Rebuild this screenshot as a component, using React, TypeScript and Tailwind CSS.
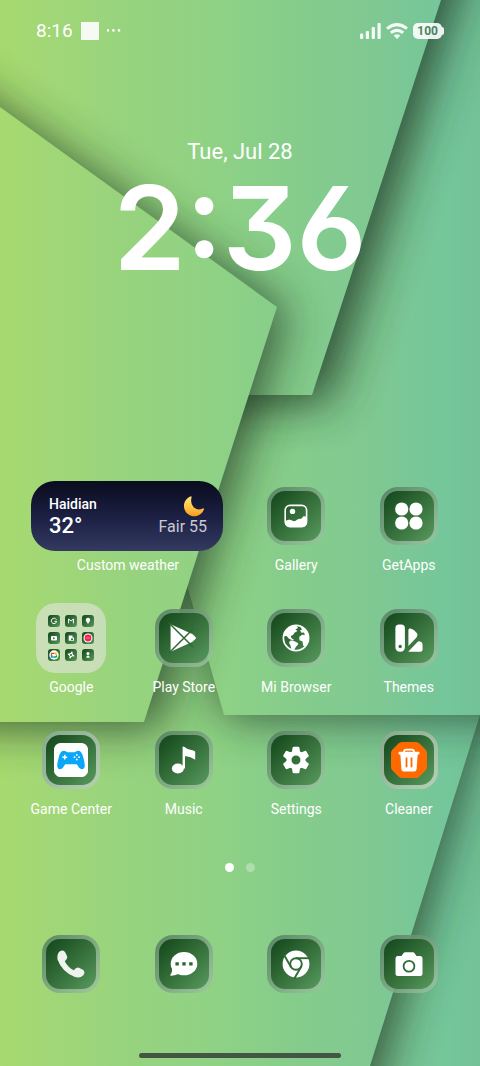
import type { ReactNode } from "react";

function Wallpaper() {
  return (
    <svg
      className="absolute inset-0 -z-10 h-full w-full"
      viewBox="0 0 480 1066"
      preserveAspectRatio="none"
      aria-hidden="true"
    >
      <defs>
        <linearGradient id="sheet" gradientUnits="userSpaceOnUse" x1="0" y1="0" x2="480" y2="0">
          <stop offset="0" stopColor="#a7da6f" />
          <stop offset="0.1" stopColor="#a1d776" />
          <stop offset="0.25" stopColor="#98d37d" />
          <stop offset="0.45" stopColor="#8fd285" />
          <stop offset="0.6" stopColor="#86cd8b" />
          <stop offset="0.78" stopColor="#7fc892" />
          <stop offset="0.93" stopColor="#74c69b" />
          <stop offset="1" stopColor="#73c197" />
        </linearGradient>
        <filter id="soft" filterUnits="userSpaceOnUse" x="-160" y="-160" width="800" height="1386">
          <feGaussianBlur stdDeviation="23" />
        </filter>
      </defs>
      <rect width="480" height="1066" fill="url(#sheet)" />
      <path d="M-60 500H545L383 1066L345 1180H-60Z" fill="#1c3424" filter="url(#soft)" opacity="0.78" />
      <path d="M0 450H563L370 1066H0Z" fill="url(#sheet)" />
      <path d="M130 380H600V719H226Z" fill="#1c3424" filter="url(#soft)" opacity="0.7" />
      <path d="M0 0H480V715H224L120 350Z" fill="url(#sheet)" />
      <path d="M-60 -60H476L328 404H100Z" fill="#1c3424" filter="url(#soft)" opacity="0.82" />
      <path d="M0 0H441L312 395H100L0 300Z" fill="url(#sheet)" />
      <path d="M-80 50L0 108L288 311L159 728H-80Z" fill="#1c3424" filter="url(#soft)" opacity="0.74" />
      <path d="M0 107L277 307L144 722H0Z" fill="url(#sheet)" />
    </svg>
  );
}

function Glyph({ children }: { children: ReactNode }) {
  return (
    <svg viewBox="0 0 50 50" className="h-full w-full" fill="currentColor" aria-hidden="true">
      {children}
    </svg>
  );
}

const glyphs = {
  gallery: (
    <Glyph>
      <rect x="14.2" y="14.4" width="21.4" height="21.2" rx="4.8" fill="none" stroke="currentColor" strokeWidth="1.6" />
      <circle cx="21.5" cy="20.4" r="2.7" />
      <path d="M14 30L17.5 28.8Q19.5 28.2 21.5 29.8Q24 31 26 28.8Q28.5 27.5 30 28L32.5 25.3Q34 24.8 36 26V31Q36 36 31 36H19Q14 36 14 31Z" />
    </Glyph>
  ),
  getApps: (
    <Glyph>
      <circle cx="17.7" cy="18" r="6.6" />
      <circle cx="32" cy="18" r="6.6" />
      <circle cx="17.7" cy="32" r="6.6" />
      <circle cx="32" cy="32" r="6.6" />
    </Glyph>
  ),
  play: (
    <Glyph>
      <path d="M11.6 11.2L32 20.6Q34 21 37.2 25Q34 29 32 29.4L11.6 38.8Z" />
      <path d="M10 10L34 34M10 40L34 16" stroke="#2c6732" strokeWidth="1.5" />
    </Glyph>
  ),
  browser: (
    <Glyph>
      <circle cx="25" cy="25" r="12.6" fill="none" stroke="currentColor" strokeWidth="1.7" />
      <path d="M12.3 23.5Q13.5 16.5 20 13.2L25.5 12.5L27 15L24.5 16.5L26.5 18L23.5 19.8L22 22L19.8 23L20.5 25.2L23 26.5L21.5 27.3L18 25.8L15.5 23Z" />
      <path d="M19 27.8Q22 26.8 24 28.5L27.3 30.3Q27 32.5 25 33.8L22.8 37.6L20.3 36.5L19.5 32.5L18 30Z" />
      <path d="M29 13.5L34 15.5L37.5 21V28L34.5 33.2L32.2 32.8L31.5 28.5L28.5 27.2L28.2 24L31 21.8L33.8 22L33 19.5L30.5 19.8L29 17.6L31 16.4Z" />
    </Glyph>
  ),
  themes: (
    <Glyph>
      <path
        fillRule="evenodd"
        d="M15 11.6H17.2Q20.9 11.6 20.9 15.3V34Q20.9 38.7 16.2 38.7Q11.4 38.7 11.4 34V15.3Q11.4 11.6 15 11.6ZM16.2 31.8A1.7 1.7 0 1 0 16.2 35.2A1.7 1.7 0 1 0 16.2 31.8Z"
      />
      <path d="M24.4 17Q24.5 15 26.5 15.6Q30 16.3 33 20.3Q34.5 22.5 32.5 24.5L24.4 33Z" />
      <path d="M24.2 38.7L33 29.5Q34.3 28.2 36 28.4Q38.3 28.8 38.5 31L38.6 36.5Q38.5 38.7 36.3 38.7Z" />
    </Glyph>
  ),
  game: (
    <Glyph>
      <path d="M14 8H36Q38 8 39.5 9.5L40.5 10.5Q42 12 42 14V36Q42 38 40.5 39.5L39.5 40.5Q38 42 36 42H14Q12 42 10.5 40.5L9.5 39.5Q8 38 8 36V14Q8 12 9.5 10.5L10.5 9.5Q12 8 14 8Z" />
      <path
        fill="#0aa6f7"
        d="M16.5 16Q19 15 21.3 17.3H28.7Q31 15 33.5 16Q36 17 37.3 22.5Q39.2 29.5 38.6 32Q37.8 34.6 35.5 34.2Q33 33.5 30.8 29.2H19.2Q17 33.5 14.5 34.2Q12.2 34.6 11.4 32Q10.8 29.5 12.7 22.5Q14 17 16.5 16Z"
      />
      <path d="M16.3 22.2H21.1M18.7 19.8V24.6" stroke="white" strokeWidth="1.5" />
      <circle cx="30.8" cy="19.9" r="0.9" />
      <circle cx="30.8" cy="24.5" r="0.9" />
      <circle cx="28.5" cy="22.2" r="0.9" />
      <circle cx="33.1" cy="22.2" r="0.9" />
    </Glyph>
  ),
  music: (
    <Glyph>
      <ellipse cx="18.9" cy="33.5" rx="6" ry="5" />
      <path d="M23.6 11.7Q24.5 11.2 25.5 12Q28.5 14.8 33.5 15.3Q36.2 15.7 36.2 17V24.7Q31 20.8 26 21.2V33.5H23.6Z" />
    </Glyph>
  ),
  settings: (
    <Glyph>
      <circle cx="25" cy="25" r="7" fill="none" stroke="currentColor" strokeWidth="5" />
      {[0, 60, 120, 180, 240, 300].map((angle) => (
        <path
          key={angle}
          d="M22.8 11.7H27.2Q28.2 11.7 28.4 12.8L29.4 18.5H20.6L21.6 12.8Q21.8 11.7 22.8 11.7Z"
          transform={`rotate(${angle} 25 25)`}
        />
      ))}
    </Glyph>
  ),
  cleaner: (
    <Glyph>
      <path
        d="M18 7H32Q34 7 35.5 8.5L41.5 14.5Q43 16 43 18V32Q43 34 41.5 35.5L35.5 41.5Q34 43 32 43H18Q16 43 14.5 41.5L8.5 35.5Q7 34 7 32V18Q7 16 8.5 14.5L14.5 8.5Q16 7 18 7Z"
        fill="#ff6a00"
      />
      <path d="M20 17Q20 14.6 22.2 14.6H28Q30 14.6 30 17" fill="none" stroke="white" strokeWidth="1.8" />
      <rect x="14.5" y="16.8" width="21" height="2.6" rx="1" />
      <path d="M16.3 19H33.7L32.6 34Q32.4 36.6 30 36.6H20Q17.6 36.6 17.4 34Z" />
      <path d="M22.5 22.5V32.3M27.5 22.5V32.3" stroke="#ff6a00" strokeWidth="1.8" />
    </Glyph>
  ),
  phone: (
    <Glyph>
      <path
        fill="#eef3ee"
        d="M13.5 12.5Q17.5 10 19.3 13.5L21 17Q22 19.5 18.8 22.2Q22 28.5 27.8 31.2Q30.5 27.8 33 28.8L37.3 31Q39.5 33.5 37.3 36.3Q34 39.5 29 38Q16 33 11.5 20.5Q10.8 15 13.5 12.5Z"
      />
    </Glyph>
  ),
  messages: (
    <Glyph>
      <ellipse cx="25" cy="24.7" rx="13.3" ry="11.6" />
      <path d="M12.5 27Q14.2 32 11.3 36Q11 37 12.3 36.8Q16 36.6 18.5 35.2L22 30Z" />
      <path d="M16.4 23.2H19.8V26.6H16.4ZM23.3 23.2H26.7V26.6H23.3ZM30.2 23.2H33.6V26.6H30.2Z" fill="#2b6732" />
    </Glyph>
  ),
  chrome: (
    <Glyph>
      <circle cx="25" cy="25" r="13.4" />
      <circle cx="25" cy="25" r="5.8" fill="none" stroke="#2f6b36" strokeWidth="1.9" />
      {[0, 120, 240].map((angle) => (
        <path
          key={angle}
          d="M25 19.2H39"
          stroke="#2f6b36"
          strokeWidth="1.9"
          transform={`rotate(${angle} 25 25)`}
        />
      ))}
    </Glyph>
  ),
  camera: (
    <Glyph>
      <path d="M13.5 17H17.5L19.6 14Q20.1 13.3 21 13.3H29Q29.9 13.3 30.4 14L32.5 17H36Q38.5 17 38.5 19.5V34.5Q38.5 37 36 37H14Q11.5 37 11.5 34.5V19.5Q11.5 17 13.5 17Z" />
      <circle cx="25" cy="27.3" r="5.4" fill="none" stroke="#2f6b36" strokeWidth="1.8" />
    </Glyph>
  ),
};

function Tile({ children, bright = false }: { children: ReactNode; bright?: boolean }) {
  return (
    <span
      className={`block size-[58px] rounded-[18px] bg-linear-to-br p-1 ${
        bright ? "from-[#86a88b] to-[#b7d2b5]" : "from-[#557f62]/90 to-[#a3c8a5]/80"
      }`}
    >
      <span className="block size-full rounded-[14px] bg-linear-to-br from-[#12461a] to-[#589a5d] text-white">
        {children}
      </span>
    </span>
  );
}

function AppIcon({ name, children, bright }: { name: string; children: ReactNode; bright?: boolean }) {
  return (
    <button type="button" className="flex flex-col items-center gap-1">
      <span className="flex h-[70px] items-center">
        <Tile bright={bright}>{children}</Tile>
      </span>
      <span className="text-sm leading-5 whitespace-nowrap">{name}</span>
    </button>
  );
}

const folderApps: ReactNode[] = [
  <path d="M8.4 4.6A2.7 2.7 0 1 0 8.7 6.3H6.4" fill="none" stroke="white" />,
  <path d="M3.6 8.3V4L6 6L8.4 4V8.3" fill="none" stroke="white" />,
  <path d="M6 9L4.2 6.2A2.2 2.2 0 1 1 7.8 6.2Z" fill="white" />,
  <>
    <rect x="3" y="4" width="6" height="4.4" rx="1" fill="white" />
    <path d="M5.2 5L7.2 6.2L5.2 7.4Z" fill="#2b6732" />
  </>,
  <>
    <path d="M3.7 3.5H7.5V5.5H9V8.7H3.7Z" fill="white" />
    <circle cx="7" cy="7.2" r="1" fill="#2b6732" />
  </>,
  <>
    <circle cx="6" cy="6" r="4.5" fill="white" />
    <circle cx="6" cy="6" r="3.4" fill="#f5244f" />
    <path d="M4 6H8" stroke="#ff8ba2" strokeWidth="0.8" />
  </>,
  <>
    <circle cx="6" cy="6" r="4.7" fill="white" />
    <path d="M3.5 7V4.3H6" fill="none" stroke="#e94335" strokeWidth="1.2" />
    <path d="M6 4.3H8V6" fill="none" stroke="#fbbc04" strokeWidth="1.4" />
    <path d="M3.5 6V8H5.5" fill="none" stroke="#2684fc" strokeWidth="1.4" />
    <path d="M5.5 8H8L9 6.5" fill="none" stroke="#00ac47" strokeWidth="1.4" />
  </>,
  <g fill="none" stroke="white" strokeWidth="1.1">
    <circle cx="6" cy="6" r="1.6" />
    <path d="M6 3.4H7.6M8.6 6V7.6M6 8.6H4.4M3.4 6V4.4" />
  </g>,
  <>
    <circle cx="6" cy="4.6" r="1.5" fill="white" />
    <path d="M4.3 8.8Q4.3 6.6 6 6.6Q7.7 6.6 7.7 8.8Z" fill="white" />
  </>,
];

function GoogleFolder() {
  return (
    <button type="button" className="flex flex-col items-center gap-1">
      <span className="grid size-[70px] grid-cols-3 place-content-center justify-items-center gap-[5px] rounded-[20px] bg-[#e4e4e0]/60 px-3">
        {folderApps.map((icon, i) => (
          <svg
            key={i}
            viewBox="0 0 12 12"
            className="size-3 rounded-[3px] bg-linear-to-br from-[#12461a] to-[#589a5d]"
            aria-hidden="true"
          >
            {icon}
          </svg>
        ))}
      </span>
      <span className="text-sm leading-5">Google</span>
    </button>
  );
}

function WeatherWidget() {
  return (
    <button type="button" className="col-span-2 flex flex-col gap-1 pl-4">
      <span className="flex h-[70px] w-[192px] items-center justify-between rounded-[24px] bg-linear-to-b from-[#0a0c1e] via-[#1b1f42] to-[#343a60] pr-4 pl-[18px]">
        <span className="flex flex-col text-left font-medium">
          <span className="text-sm leading-5">Haidian</span>
          <span className="text-[22px] leading-6">32°</span>
        </span>
        <span className="flex flex-col items-end">
          <svg viewBox="0 0 24 21" className="h-[21px] w-6" aria-hidden="true">
            <defs>
              <linearGradient id="moon" x1="0" y1="0" x2="0" y2="1">
                <stop offset="0" stopColor="#ffe27a" />
                <stop offset="0.55" stopColor="#fdc843" />
                <stop offset="1" stopColor="#f89a1c" />
              </linearGradient>
            </defs>
            <path
              d="M7.3 0.4A10.3 10.3 0 1 0 21 13.2Q21.1 12 19.8 12.4Q14.3 14.8 10.6 11.3Q7 7 8.6 1.2Q8.8 0 7.3 0.4Z"
              fill="url(#moon)"
            />
          </svg>
          <span className="text-base leading-5 text-[#c9cad6]">Fair 55</span>
        </span>
      </span>
      <span className="w-[194px] text-center text-sm leading-5">Custom weather</span>
    </button>
  );
}

function StatusBar() {
  return (
    <header className="flex items-center justify-between px-9 pt-[21px]">
      <div className="flex items-center gap-2">
        <span className="text-[19px] leading-5">8:16</span>
        <span className="size-[18px] bg-white/90" />
        <svg viewBox="0 0 16 4" className="h-1 w-4" fill="white" aria-hidden="true">
          <circle cx="0.8" cy="1.4" r="1.3" />
          <circle cx="6.4" cy="1.4" r="1.3" />
          <circle cx="12" cy="1.4" r="1.3" />
        </svg>
      </div>
      <div className="flex items-center gap-[5px]">
        <svg viewBox="0 0 21 16" className="h-4 w-[21px]" fill="white" fillOpacity="0.92" aria-hidden="true">
          <rect y="10.5" width="3.2" height="5.5" rx="1" />
          <rect x="5.8" y="8" width="3.2" height="8" rx="1" />
          <rect x="11.7" y="4" width="3.2" height="12" rx="1" />
          <rect x="17.5" width="3.2" height="16" rx="1" />
        </svg>
        <svg viewBox="0 0 22 16" className="h-4 w-[22px]" aria-hidden="true">
          <g fill="none" stroke="white" strokeOpacity="0.92" strokeWidth="3">
            <path d="M1 5.6Q11 -2.4 21 5.6" />
            <path d="M4.8 9.8Q11 5 17.2 9.8" />
          </g>
          <path d="M7.7 12.4Q11 10 14.3 12.4L11.6 15.4Q11 16 10.4 15.4Z" fill="white" fillOpacity="0.92" />
        </svg>
        <span className="flex items-center">
          <span className="rounded-[5px] bg-white/90 px-1 text-xs leading-4 font-bold text-[#4b8363]">100</span>
          <span className="h-2 w-0.5 rounded-r-full bg-white/90" />
        </span>
      </div>
    </header>
  );
}

export default function App() {
  return (
    <div className="relative isolate flex min-h-screen flex-col overflow-hidden font-[Roboto,sans-serif] text-white">
      <Wallpaper />
      <StatusBar />

      <section className="flex flex-col items-center pt-[97px]">
        <p className="text-[22px] leading-7">Tue, Jul 28</p>
        <time className="font-[Inter,sans-serif] text-[116px] leading-[124px] font-semibold [font-feature-settings:'cv09','cv03','ss03']">
          2:36
        </time>
      </section>

      <main className="mt-auto grid grid-cols-4 gap-y-7 px-[15px]">
        <WeatherWidget />
        <AppIcon name="Gallery">{glyphs.gallery}</AppIcon>
        <AppIcon name="GetApps">{glyphs.getApps}</AppIcon>
        <GoogleFolder />
        <AppIcon name="Play Store">{glyphs.play}</AppIcon>
        <AppIcon name="Mi Browser">{glyphs.browser}</AppIcon>
        <AppIcon name="Themes">{glyphs.themes}</AppIcon>
        <AppIcon name="Game Center" bright>{glyphs.game}</AppIcon>
        <AppIcon name="Music">{glyphs.music}</AppIcon>
        <AppIcon name="Settings">{glyphs.settings}</AppIcon>
        <AppIcon name="Cleaner" bright>{glyphs.cleaner}</AppIcon>
      </main>

      <div className="flex justify-center gap-3 pt-11">
        <span className="size-[9px] rounded-full bg-white" />
        <span className="size-[9px] rounded-full bg-white/30" />
      </div>

      <nav className="grid grid-cols-4 justify-items-center px-[15px] pt-[63px]">
        <button type="button" aria-label="Phone">
          <Tile>{glyphs.phone}</Tile>
        </button>
        <button type="button" aria-label="Messages">
          <Tile>{glyphs.messages}</Tile>
        </button>
        <button type="button" aria-label="Chrome">
          <Tile>{glyphs.chrome}</Tile>
        </button>
        <button type="button" aria-label="Camera">
          <Tile>{glyphs.camera}</Tile>
        </button>
      </nav>

      <div className="mx-auto mt-[60px] mb-2 h-[5px] w-[42%] rounded-full bg-[#435543]" />
    </div>
  );
}
